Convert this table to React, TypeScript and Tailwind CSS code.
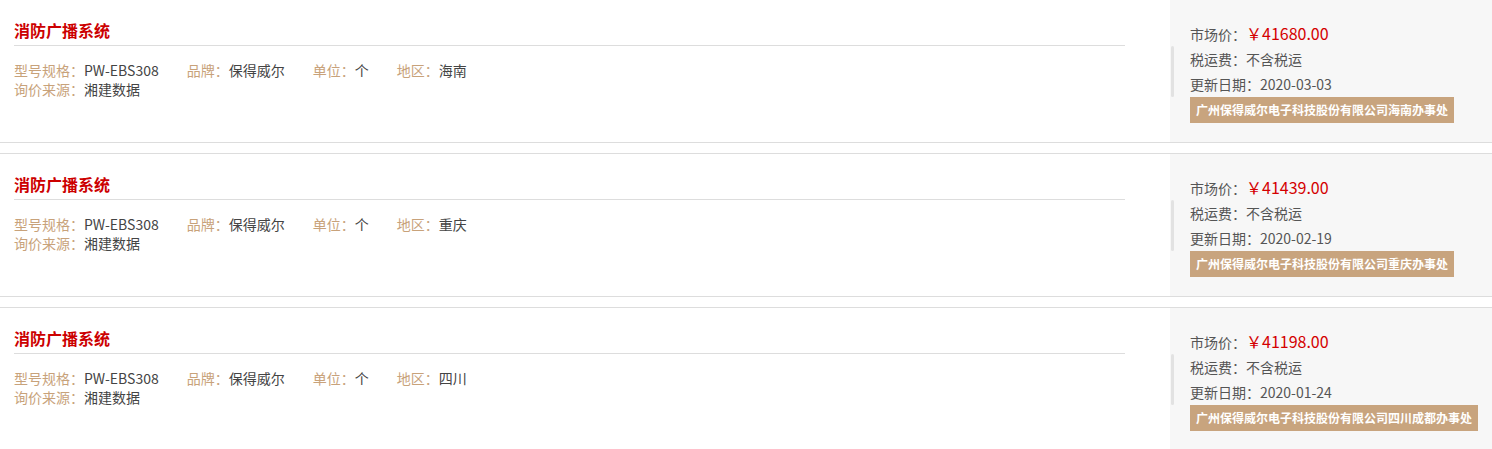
const items = [
  { region: "海南", price: "41680.00", date: "2020-03-03", office: "广州保得威尔电子科技股份有限公司海南办事处" },
  { region: "重庆", price: "41439.00", date: "2020-02-19", office: "广州保得威尔电子科技股份有限公司重庆办事处" },
  { region: "四川", price: "41198.00", date: "2020-01-24", office: "广州保得威尔电子科技股份有限公司四川成都办事处" },
];

const font = "font-['Microsoft_YaHei','Noto_Sans_CJK_SC',sans-serif]";

const Field = ({ label, value, last }: { label: string; value: string; last?: boolean }) => (
  <span className={last ? "" : "mr-[28px]"}>
    <span className="text-[#c8a27a]">{label}：</span>
    <span className="text-[#444]">{value}</span>
  </span>
);

export default function App() {
  return (
    <div className={`${font} bg-white w-[1492px] h-[449px] overflow-hidden`}>
      <div className="-mt-px">
        {items.map((it, i) => (
          <div key={i} className="flex h-[144px] border-y border-[#dddddd] mb-[10px]">
            {/* left info */}
            <div className="flex-1 pl-[14px] pr-[45px] pt-[19px]">
              <div className="text-[16px] leading-[22px] font-bold text-[#cc0000] pb-[4px] border-b border-[#dddddd]">
                消防广播系统
              </div>
              <div className="mt-[15px] text-[14px] leading-[19px]">
                <div>
                  <Field label="型号规格" value="PW-EBS308" />
                  <Field label="品牌" value="保得威尔" />
                  <Field label="单位" value="个" />
                  <Field label="地区" value={it.region} last />
                </div>
                <div>
                  <Field label="询价来源" value="湘建数据" last />
                </div>
              </div>
            </div>

            {/* right price panel */}
            <div className="relative w-[322px] bg-[#f7f7f7] pl-[20px] pt-[20px] text-[14px] text-[#555]">
              <div className="absolute left-[1px] top-[46px] w-[3px] h-[51px] rounded-sm bg-[#e2e2e2]" />
              <div className="leading-[26px]">
                市场价：<span className="text-[16px] text-[#d40000]">￥{it.price}</span>
              </div>
              <div className="leading-[25px]">税运费：不含税运</div>
              <div className="leading-[24px]">更新日期：{it.date}</div>
              <div className="mt-[1px] w-fit bg-[#c8a47e] text-white text-[12px] font-bold leading-[26px] px-[6px]">
                {it.office}
              </div>
            </div>
          </div>
        ))}
      </div>
    </div>
  );
}
